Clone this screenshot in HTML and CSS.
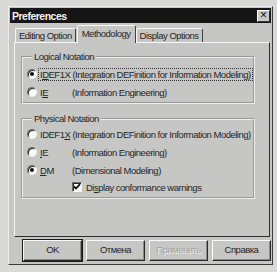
FILE: index.html
```html
<!DOCTYPE html>
<html lang="en">
<head>
  <meta charset="UTF-8" />
  <title>Preferences</title>
  <link rel="stylesheet" href="styles.css">
</head>
<body>

  <div class="window">
    <div class="titlebar">
      <span class="title">Preferences</span>
      <span class="close">&times;</span>
    </div>

    <div class="tabs">
      <div class="tab">Editing Option</div>
      <div class="tab active">Methodology</div>
      <div class="tab">Display Options</div>
    </div>

    <div class="panel">
      <fieldset class="group group-logical">
        <legend>Logical Notation</legend>
        <div class="option">
          <span class="radio checked"></span>
          <span class="label focus">I<u>D</u>EF1X (Integration DEFinition for Information Modeling)</span>
        </div>
        <div class="option">
          <span class="radio"></span>
          <span class="label"><span class="code">I<u>E</u></span>(Information Engineering)</span>
        </div>
      </fieldset>

      <fieldset class="group group-physical">
        <legend>Physical Notation</legend>
        <div class="option">
          <span class="radio"></span>
          <span class="label">IDEF1<u>X</u> (Integration DEFinition for Information Modeling)</span>
        </div>
        <div class="option">
          <span class="radio"></span>
          <span class="label"><span class="code"><u>I</u>E</span>(Information Engineering)</span>
        </div>
        <div class="option">
          <span class="radio checked"></span>
          <span class="label"><span class="code"><u>D</u>M</span>(Dimensional Modeling)</span>
        </div>
        <div class="option option-check">
          <span class="checkbox">
            <svg width="8" height="8" viewBox="0 0 8 8"><path d="M1 3.5 L3 5.5 L7 1.2" fill="none" stroke="#111" stroke-width="1.8"/></svg>
          </span>
          <span class="label">Di<u>s</u>play conformance warnings</span>
        </div>
      </fieldset>
    </div>

    <div class="buttons">
      <div class="btn default">OK</div>
      <div class="btn">Отмена</div>
      <div class="btn disabled">Применить</div>
      <div class="btn">Справка</div>
    </div>
  </div>

</body>
</html>
```

FILE: styles.css
```css
* {
  box-sizing: border-box;
}

body {
  margin: 0;
  background-color: #d9d9d7;
  font-family: "Liberation Sans", Arial, sans-serif;
  font-size: 9.5px;
  letter-spacing: -0.5px;
  color: #262626;
}

.window {
  margin: 6px 0 0 8px;
  width: 265px;
  height: 259px;
  padding: 1px;
  background-color: #c6c6c4;
  border: 1px solid;
  border-color: #ececec #3a3a3a #3a3a3a #ececec;
}

.titlebar {
  height: 15px;
  display: flex;
  align-items: center;
  justify-content: space-between;
  padding: 0 1px 0 2px;
  background-color: #161616;
}

.title {
  color: #f2f2f2;
  font-weight: bold;
  font-size: 10.5px;
}

.close {
  width: 13px;
  height: 12px;
  background-color: #c8c8c6;
  border: 1px solid;
  border-color: #fff #333 #333 #fff;
  font-size: 12px;
  line-height: 9px;
  letter-spacing: 0;
  text-align: center;
  color: #111;
}

/* tab strip */
.tabs {
  display: flex;
  align-items: flex-end;
  height: 17px;
  margin-top: 2px;
  padding-left: 5px;
}

.tab {
  height: 14px;
  padding: 0 3px;
  line-height: 13px;
  border: 1px solid;
  border-bottom: none;
  border-color: #f6f6f6 #404040 transparent #f6f6f6;
  border-radius: 2px 2px 0 0;
}

.tab.active {
  position: relative;
  z-index: 1;
  height: 18px;
  margin: 0 -1px -1px;
  padding: 0 4px;
  line-height: 15px;
  background-color: #c6c6c4;
}

.tab + .tab {
  margin-left: 1px;
}

.panel {
  margin-left: 4px;
  width: 256px;
  height: 195px;
  padding: 8px 14px 0 6px;
  border: 1px solid;
  border-color: #f6f6f6 #2c2c2c #2c2c2c #f6f6f6;
}

/* group boxes */
.group {
  margin: 0;
  padding: 0 0 1px 4px;
  border: 2px groove #eeeeec;
}

.group legend {
  margin-left: 5px;
  padding: 0 2px;
  line-height: 12px;
}

.group-logical {
  padding-top: 2px;
}

.group-physical {
  margin-top: 9px;
  padding-bottom: 2px;
}

.option {
  display: flex;
  align-items: center;
  height: 18px;
}

.option-check {
  height: 16px;
  padding-left: 45px;
}

.radio {
  position: relative;
  flex: none;
  width: 10px;
  height: 10px;
  border-radius: 50%;
  background-color: #fafafa;
  border: 1px solid;
  border-color: #6c6c6c #f2f2f2 #f2f2f2 #6c6c6c;
  box-shadow: inset 1px 1px 0 #2a2a2a;
}

.radio.checked::after {
  content: "";
  position: absolute;
  left: 2px;
  top: 2px;
  width: 4px;
  height: 4px;
  border-radius: 50%;
  background-color: #111;
}

.label {
  margin-left: 3px;
  white-space: nowrap;
}

.label.focus {
  margin-left: 1px;
  padding: 0 1px;
  border: 1px dotted #333;
}

.code {
  display: inline-block;
  width: 32px;
}

.checkbox {
  display: flex;
  flex: none;
  align-items: center;
  justify-content: center;
  width: 10px;
  height: 10px;
  background-color: #fafafa;
  border: 1px solid;
  border-color: #6c6c6c #f2f2f2 #f2f2f2 #6c6c6c;
  box-shadow: inset 1px 1px 0 #2a2a2a;
}

.option-check .label {
  margin-left: 4px;
}

/* dialog buttons */
.buttons {
  display: flex;
  gap: 4px;
  margin: 3px 0 0 13px;
}

.btn {
  width: 59px;
  height: 21px;
  line-height: 18px;
  text-align: center;
  border: 1px solid;
  border-color: #fafafa #2a2a2a #2a2a2a #fafafa;
  box-shadow: inset -1px -1px 0 #8a8a8a;
}

.btn.default {
  outline: 1px solid #1a1a1a;
}

.btn.disabled {
  color: #a2a2a2;
  text-shadow: 1px 1px 0 #efefef;
}
```
